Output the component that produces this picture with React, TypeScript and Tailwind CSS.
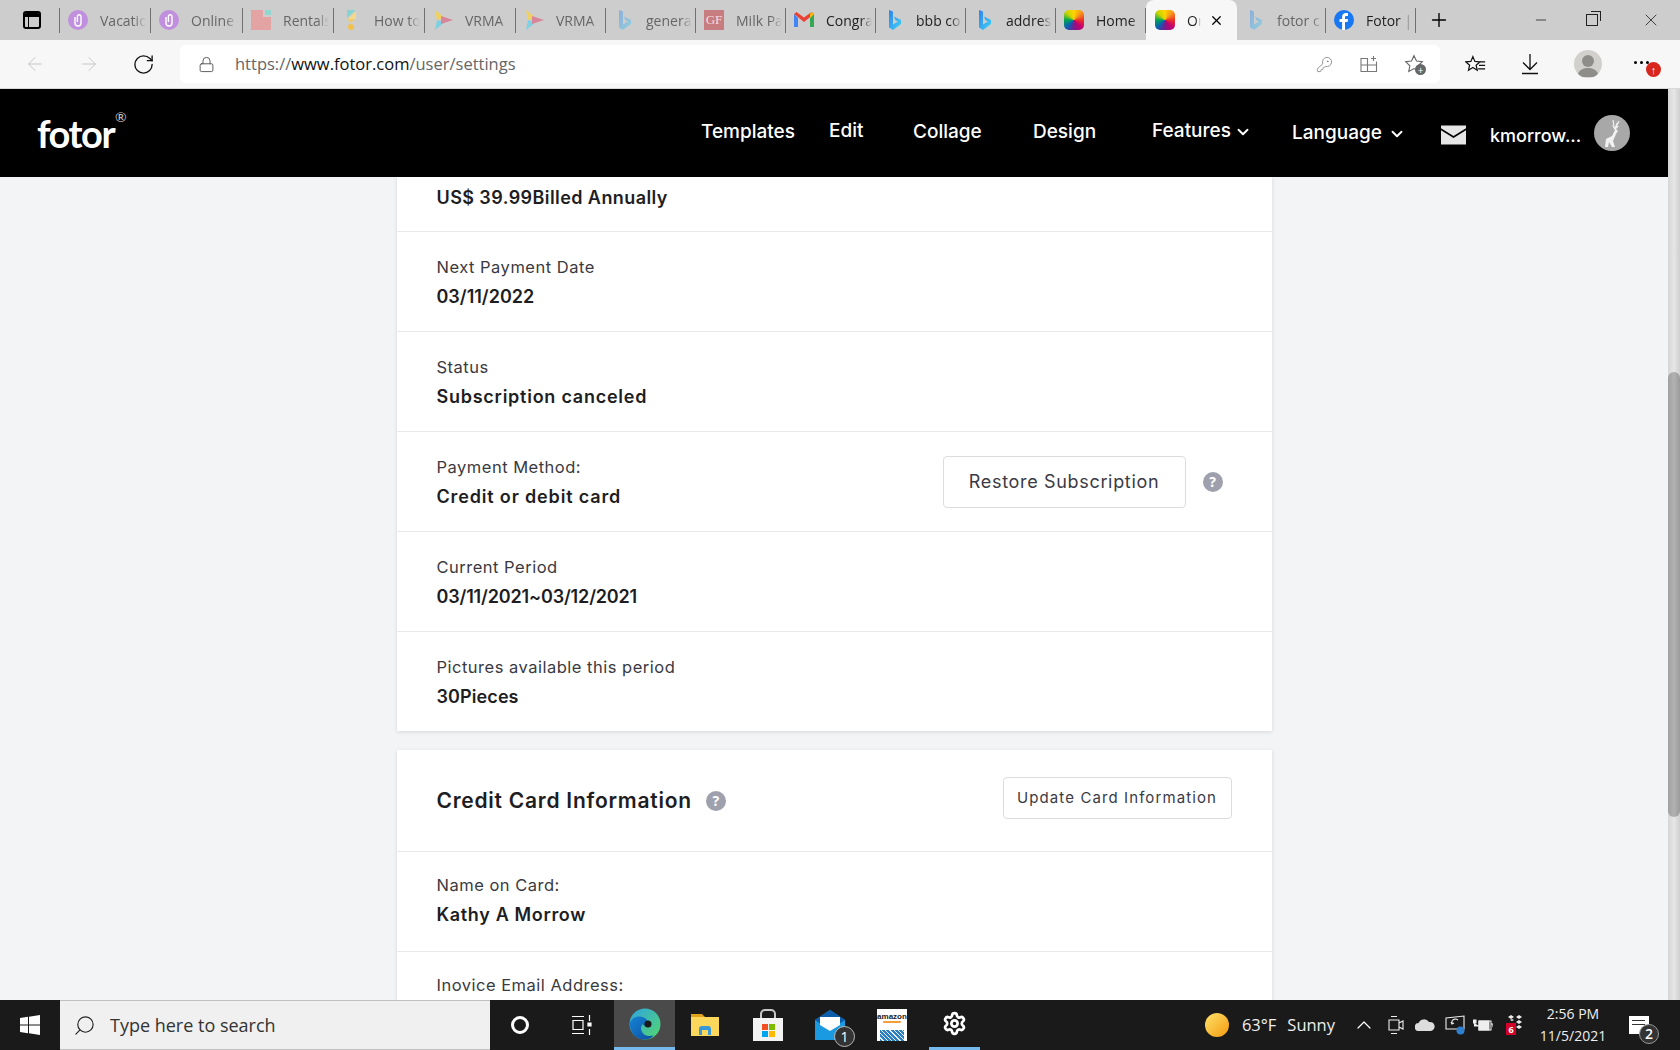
import React from 'react';
import { Plus, X, Minus, ArrowLeft, ArrowRight, RotateCw, ChevronDown, ChevronUp, Search, Settings, Lock, KeyRound } from 'lucide-react';

const uiFont = 'font-["Open_Sans",sans-serif]';

const Clip = () => (
  <svg viewBox="0 0 20 20" className="h-5 w-5">
    <circle cx="10" cy="10" r="10" fill="#c08fdd" />
    <path d="M7 7v6a3 3 0 0 0 6 0V6.500a1.800 1.800 0 0 0-3.600 0V12" fill="none" stroke="#fff" strokeWidth="1.400" />
  </svg>
);
const Rentals = () => (
  <svg viewBox="0 0 20 20" className="h-5 w-5">
    <path d="M0 0h12v7h8v13H0z" fill="#e4a3a3" />
    <path d="M14 0h6v5h-6z" fill="#8ed8d0" />
  </svg>
);
const HowTo = () => (
  <svg viewBox="0 0 20 20" className="h-5 w-5">
    <path d="M5 0h9L5 8z" fill="#86d4cf" />
    <path d="M14 1v8H6z" fill="#f2d98c" />
    <path d="M5 9h8l-4 4z" fill="#eecb6f" />
    <circle cx="9" cy="17" r="3" fill="#f0c14d" />
  </svg>
);
const Vrma = () => (
  <svg viewBox="0 0 20 20" className="h-5 w-5">
    <path d="M2 0l10 8-8 2z" fill="#f0d060" />
    <path d="M2 20l10-8-8-2z" fill="#7fd0e0" />
    <path d="M8 6l12 4-12 4z" fill="#d8849a" />
  </svg>
);
const Bing = ({ faded = false }: { faded?: boolean }) => (
  <svg viewBox="0 0 20 20" className={`h-5 w-5 ${faded ? 'opacity-40' : ''}`}>
    <defs>
      <linearGradient id={faded ? 'bingf' : 'bing'} x1="0" y1="0" x2="1" y2="1">
        <stop offset="0" stopColor="#2f80ed" />
        <stop offset="1" stopColor="#3fd5f5" />
      </linearGradient>
    </defs>
    <path d="M5 0l4 1.500v13l5-3-2.500-1.200L10 6.500l7 3.500v4l-8 6-4-2.500z" fill={`url(#${faded ? 'bingf' : 'bing'})`} />
  </svg>
);
const GoodFaith = () => (
  <div className="flex h-5 w-5 items-center justify-center bg-[#c77c80] font-['Liberation_Serif',serif] text-[13px] text-[#f3dede]">GF</div>
);
const Gmail = () => (
  <svg viewBox="0 0 20 20" className="h-5 w-5">
    <path d="M0 4v13h4V8z" fill="#4285f4" />
    <path d="M16 8v9h4V4z" fill="#34a853" />
    <path d="M0 4l10 8 10-8-2.500-2L10 7.500 2.500 2z" fill="#ea4335" />
    <path d="M17.500 2L20 4l-4 4V4z" fill="#fbbc04" />
  </svg>
);
const FotorIcon = () => (
  <div className="h-5 w-5 rounded-[5px] bg-[conic-gradient(#ffd400_0deg,#f7941d_45deg,#ee3124_90deg,#c4006e_135deg,#7d1a8c_180deg,#0a5fb4_225deg,#00a651_270deg,#c9d400_315deg,#ffd400_360deg)]" />
);
const Facebook = () => (
  <svg viewBox="0 0 20 20" className="h-5 w-5">
    <circle cx="10" cy="10" r="10" fill="#1877f2" />
    <path d="M11 20v-8h2.600l.4-3h-3V7.300c0-.9.400-1.400 1.500-1.400H14V3.200C13.500 3.100 12.700 3 12 3 9.700 3 8.100 4.400 8.100 7v2H5.500v3h2.600v8z" fill="#fff" />
  </svg>
);

const tabs = [
  { icon: <Clip />, label: 'Vacation', w: 'w-[91px]', text: 'text-[#666]' },
  { icon: <Clip />, label: 'Online', w: 'w-[92px]', text: 'text-[#666]' },
  { icon: <Rentals />, label: 'Rentals', w: 'w-[91px]', text: 'text-[#666]' },
  { icon: <HowTo />, label: 'How to', w: 'w-[91px]', text: 'text-[#666]' },
  { icon: <Vrma />, label: 'VRMA', w: 'w-[91px]', text: 'text-[#666]' },
  { icon: <Vrma />, label: 'VRMA', w: 'w-[90px]', text: 'text-[#666]' },
  { icon: <Bing faded />, label: 'general', w: 'w-[90px]', text: 'text-[#666]' },
  { icon: <GoodFaith />, label: 'Milk Pa', w: 'w-[90px]', text: 'text-[#666]' },
  { icon: <Gmail />, label: 'Congra', w: 'w-[90px]', text: 'text-[#222]' },
  { icon: <Bing />, label: 'bbb co', w: 'w-[90px]', text: 'text-[#222]' },
  { icon: <Bing />, label: 'address', w: 'w-[90px]', text: 'text-[#222]' },
  { icon: <FotorIcon />, label: 'Home', w: 'w-[90px]', text: 'text-[#222]' },
];

const Tab = ({ icon, label, w, text }: { icon: React.ReactNode; label: string; w: string; text: string }) => (
  <div className={`relative flex h-10 shrink-0 items-center ${w}`}>
    <div className="ml-2 shrink-0">{icon}</div>
    <span className={`ml-3 w-[46px] overflow-hidden whitespace-nowrap text-[14px] ${text} [mask-image:linear-gradient(to_right,black_75%,transparent)]`}>{label}</span>
    <div className="absolute right-0 top-2 h-[25px] w-px bg-[#707070]" />
  </div>
);

const TabStrip = () => (
  <div className={`flex h-10 shrink-0 items-center bg-[#cdcdcd] ${uiFont}`}>
    <div className="flex h-10 w-[59px] items-center justify-center pl-1">
      <div className="flex h-[18px] w-[18px] flex-col overflow-hidden rounded-[3px] border-2 border-black">
        <div className="h-[4px] bg-black" />
        <div className="ml-[3px] flex-1 border-l border-black" />
      </div>
    </div>
    <div className="h-[25px] w-px bg-[#707070]" />
    {tabs.map((t, i) => (
      <Tab key={i} {...t} />
    ))}
    <div className="flex h-10 w-[91px] shrink-0 items-center rounded-t-lg bg-[#f7f7f7] pl-[9px]">
      <FotorIcon />
      <span className="ml-3 w-[14px] overflow-hidden text-[14px] text-[#222] [mask-image:linear-gradient(to_right,black_60%,transparent)]">Or</span>
      <X size={15} className="ml-[8px] text-black" />
    </div>
    <Tab icon={<Bing faded />} label="fotor c" w="w-[89px]" text="text-[#666]" />
    <Tab icon={<Facebook />} label="Fotor |" w="w-[90px]" text="text-[#222]" />
    <Plus size={22} strokeWidth={1.5} className="ml-[12px] text-black" />
    <div className="ml-auto flex items-center text-[#222]">
      <Minus size={16} strokeWidth={1.2} />
      <div className="relative ml-[37px] h-[12px] w-[12px] border border-[#222] before:absolute before:-right-[4px] before:-top-[4px] before:h-[10px] before:w-[10px] before:border-r before:border-t before:border-[#222]" />
      <X size={20} strokeWidth={1} className="ml-[43px] mr-[19px]" />
    </div>
  </div>
);

const Toolbar = () => (
  <div className={`flex h-[48px] shrink-0 items-start bg-[#f7f7f7] pt-[5px] ${uiFont}`}>
    <div className="flex h-[38px] w-[180px] shrink-0 items-center pl-[24px]">
      <ArrowLeft size={22} strokeWidth={1} className="text-[#c2c2c2]" />
      <ArrowRight size={22} strokeWidth={1} className="ml-[32px] text-[#c2c2c2]" />
      <RotateCw size={23} strokeWidth={1.4} className="ml-[32px] text-[#111]" />
    </div>
    <div className="flex h-[38px] w-[1260px] shrink-0 items-center rounded-md bg-white">
      <Lock size={17} strokeWidth={1.2} className="ml-[18px] text-[#444]" />
      <div className="ml-[20px] text-[16.500px] text-[#666]">
        https://<span className="text-[#111]">www.fotor.com</span>/user/settings
      </div>
      <div className="ml-auto flex items-center text-[#777]">
        <KeyRound size={17} strokeWidth={1.1} />
        <svg viewBox="0 0 18 18" className="ml-[27px] h-[18px] w-[18px]" fill="none" stroke="#777" strokeWidth="1.1">
          <path d="M1 3.500h6.500v13H1zM1 10h15.500v6.500H7.500M7.500 10h9V6.500M13.500 1v5M11 3.500h5" />
        </svg>
        <div className="relative ml-[26px] mr-[16px]">
          <svg viewBox="0 0 24 24" className="h-[20px] w-[20px]" fill="none" stroke="#666" strokeWidth="1.3">
            <path d="M12 2l3 6.500 7 .8-5 4.800 1.300 7L12 17.500 5.700 21 7 14.100 2 9.300l7-.8z" />
          </svg>
          <div className="absolute -bottom-[1px] -right-[2px] flex h-[11px] w-[11px] items-center justify-center rounded-full bg-[#666] text-[10px] leading-none text-white">+</div>
        </div>
      </div>
    </div>
    <div className="flex h-[38px] flex-1 items-center text-[#111]">
      <svg viewBox="0 0 24 24" className="ml-[25px] h-[21px] w-[21px]" fill="none" stroke="#111" strokeWidth="1.4">
        <path d="M9 3l2.300 5.500 5.700.5-4.300 3.800 1.300 5.700L9 15.500 4 18.500l1.300-5.700L1 9l5.700-.5zM17 9h6M16 13h7M15 17h8" />
      </svg>
      <svg viewBox="0 0 22 22" className="ml-[33px] h-[22px] w-[22px]" fill="none" stroke="#111" strokeWidth="1.3">
        <path d="M11 1v15M4 9.500l7 7 7-7M3 20.500h16" />
      </svg>
      <div className="ml-[33px] flex h-7 w-7 items-end justify-center overflow-hidden rounded-full bg-[#d2d0cc]">
        <svg viewBox="0 0 28 28" className="h-7 w-7">
          <circle cx="14" cy="11" r="6" fill="#8f8d89" />
          <path d="M3 27c1-7 6-9 11-9s10 2 11 9z" fill="#8f8d89" />
        </svg>
      </div>
      <div className="relative ml-[32px] h-4 w-6">
        <div className="absolute left-0 top-[5px] flex gap-[3px]">
          <div className="h-[3px] w-[3px] rounded-full bg-black" />
          <div className="h-[3px] w-[3px] rounded-full bg-black" />
          <div className="h-[3px] w-[3px] rounded-full bg-black" />
        </div>
        <div className="absolute left-[12px] top-[6px] flex h-[15px] w-[15px] items-center justify-center rounded-full bg-[#d9261c] text-[11px] font-bold leading-none text-white">↑</div>
      </div>
    </div>
  </div>
);

const Stag = () => (
  <svg viewBox="0 0 36 36" className="h-9 w-9">
    <circle cx="18" cy="18" r="18" fill="#a8a8a8" />
    <path d="M23 7l-2 5-3-2 2 4 1 1-3 6-6 3-1 8h3l1-5 3 5h3l-2-6 3-7 2-3-2-2 3-3-2 0z" fill="#f2f2f2" />
    <path d="M19 5l1 6M25 6l-3 6" stroke="#f2f2f2" strokeWidth="1.200" />
  </svg>
);

const NavBar = () => (
  <div className="flex h-[88px] shrink-0 items-center bg-black text-white">
    <div className="ml-[37px] flex items-start font-['Lato',sans-serif] text-[38px] font-bold leading-none tracking-[-1.500px]">
      fotor
      <span className="-mt-[4px] ml-[1px] text-[14px] font-normal tracking-normal text-[#ccc]">®</span>
    </div>
    <div className="ml-auto flex items-center pb-[2px] font-['Inter',sans-serif] text-[19px] font-medium whitespace-nowrap">
      <span className="mt-[1px] w-[96px]">Templates</span>
      <span className="ml-[32px] mt-[-1px] w-[33px]">Edit</span>
      <span className="ml-[51px] w-[69px]">Collage</span>
      <span className="ml-[51px] w-[62px]">Design</span>
      <span className="ml-[57px] mt-[-1px] w-[78px]">Features</span>
      <ChevronDown size={18} strokeWidth={2.5} className="ml-[4px]" />
      <span className="ml-[40px] mt-[3px] w-[92px]">Language</span>
      <ChevronDown size={18} strokeWidth={2.5} className="ml-[4px] mt-[3px]" />
      <svg viewBox="0 0 26 20" className="ml-[35px] mt-[5px] h-[20px] w-[25px]">
        <path d="M0 0h26v3L13 11 0 3z" fill="#e6e6e6" />
        <path d="M0 5l13 8 13-8v15H0z" fill="#e6e6e6" />
      </svg>
      <span className="ml-[24px] mt-[6px] w-[90px] text-[18px]">kmorrow...</span>
      <div className="ml-[14px] mr-[38px] mt-[1px]">
        <Stag />
      </div>
    </div>
  </div>
);

const Help = ({ className = '' }: { className?: string }) => (
  <div className={`flex h-5 w-5 items-center justify-center rounded-full bg-[#9ea1ad] text-[14px] font-bold leading-none text-white ${className}`}>?</div>
);

const labelCls = "font-['Inter',sans-serif] text-[16.500px] leading-[24px] tracking-[0.5px] text-[#3a3a3f]";
const valueCls = "font-['Inter',sans-serif] text-[18px] font-semibold leading-[24px] text-[#1d1d22]";

const Row = ({ label, value, track, pb = '', children }: { label: string; value: string; track: string; pb?: string; children?: React.ReactNode }) => (
  <div className={`flex h-[100px] items-center justify-between border-b border-[#e8e8ea] pl-10 pr-[49px] ${pb}`}>
    <div>
      <div className={labelCls}>{label}</div>
      <div className={`mt-[6px] ${valueCls} ${track}`}>{value}</div>
    </div>
    {children}
  </div>
);

const Content = () => (
  <div className="flex flex-1 flex-col items-center overflow-hidden bg-[#f3f4f6]">
    <div className="w-[875px] shrink-0 bg-white shadow-[0_1px_4px_rgba(0,0,0,0.12)]">
      <div className="flex h-[55px] items-start border-b border-[#e8e8ea] pl-10 pt-[9px]">
        <div className={`${valueCls} tracking-[0.42px]`}>US$ 39.99Billed Annually</div>
      </div>
      <Row label="Next Payment Date" value="03/11/2022" track="tracking-[0px]" />
      <Row label="Status" value="Subscription canceled" track="tracking-[0.75px]" />
      <Row label="Payment Method:" value="Credit or debit card" track="tracking-[0.84px]">
        <div className="flex items-center">
          <div className="flex h-[52px] w-[243px] items-center justify-center rounded border border-[#dcdcdf] font-['Inter',sans-serif] text-[18px] tracking-[0.67px] text-[#3a3a46]">Restore Subscription</div>
          <Help className="ml-[17px]" />
        </div>
      </Row>
      <Row label="Current Period" value="03/11/2021~03/12/2021" track="tracking-[-0.16px]" />
      <div className="flex h-[99px] items-center pl-10">
        <div>
          <div className={labelCls}>Pictures available this period</div>
          <div className={`mt-[6px] ${valueCls} tracking-[0.1px]`}>30Pieces</div>
        </div>
      </div>
    </div>
    <div className="mt-[19px] w-[875px] shrink-0 bg-white shadow-[0_1px_4px_rgba(0,0,0,0.12)]">
      <div className="flex h-[102px] items-center justify-between border-b border-[#e8e8ea] pl-10 pr-10">
        <div className="flex items-center">
          <span className="font-['Inter',sans-serif] text-[21px] font-semibold tracking-[0.75px] text-[#1d1d22]">Credit Card Information</span>
          <Help className="ml-[14px]" />
        </div>
        <div className="mb-[5px] flex h-[42px] w-[229px] items-center justify-center rounded border border-[#dcdcdf] font-['Inter',sans-serif] text-[15px] tracking-[1.1px] text-[#3a3a46]">Update Card Information</div>
      </div>
      <Row label="Name on Card:" value="Kathy A Morrow" track="tracking-[0.65px]" pb="pb-[4px]" />
      <div className="h-[100px] pl-10 pt-[21px]">
        <div className={labelCls}>Inovice Email Address:</div>
      </div>
    </div>
  </div>
);

const Scrollbar = () => (
  <div className="w-3 shrink-0 bg-[linear-gradient(to_right,#d6d6d6,#e6e6e6_50%,#cfcfcf)] pt-[283px]">
    <div className="h-[445px] rounded-[6px] bg-[linear-gradient(to_right,#a0a0a0,#b2b2b2_50%,#9a9a9a)]" />
  </div>
);

const EdgeIcon = () => (
  <svg viewBox="0 0 32 32" className="h-8 w-8">
    <defs>
      <linearGradient id="edgeA" x1="0" y1="0" x2="1" y2="1">
        <stop offset="0" stopColor="#2fa4e0" />
        <stop offset="1" stopColor="#54d86c" />
      </linearGradient>
      <linearGradient id="edgeB" x1="0" y1="0" x2="1" y2="1">
        <stop offset="0" stopColor="#1583d6" />
        <stop offset="1" stopColor="#0d4f9e" />
      </linearGradient>
    </defs>
    <circle cx="16" cy="16" r="15.500" fill="url(#edgeA)" />
    <path d="M1 15C3 8 11 7 16 10c3 2 3.500 5 2 7-1 1.500-4 1-4-1-3 2-3 8 2 11 3 1.500 7 1 9 0-3 4-7 4.500-10 4.500C7 31.500 0 24 1 15z" fill="url(#edgeB)" />
    <circle cx="19" cy="16" r="3.500" fill="#1a1a1a" />
  </svg>
);

const Taskbar = () => (
  <div className={`flex h-[50px] shrink-0 items-center bg-[#1a1a1a] text-white ${uiFont}`}>
    <div className="flex h-full w-[60px] items-center justify-center">
      <svg viewBox="0 0 20 20" className="h-5 w-5" fill="#fff">
        <path d="M0 3l8-1.200V9.500H0zM9 1.700L20 0v9.500H9zM0 10.500h8v7.700L0 17zM9 10.500h11V20L9 18.300z" />
      </svg>
    </div>
    <div className="flex h-full w-[430px] items-center border-y border-[#c0c0c0] bg-[#f0f0f0] text-[#333]">
      <Search size={23} strokeWidth={1.2} className="ml-[13px] -scale-x-100 text-[#222]" />
      <span className="ml-[14px] text-[18px]">Type here to search</span>
    </div>
    <div className="flex h-full w-[60px] items-center justify-center">
      <div className="h-[18px] w-[18px] rounded-full border-[3px] border-white" />
    </div>
    <div className="flex h-full w-[64px] items-center justify-center">
      <svg viewBox="0 0 20 20" className="h-5 w-5" fill="none" stroke="#fff" strokeWidth="1.2">
        <path d="M0 1.500h12M0 18.500h12M1 5.500h10v9H1zM17.500 0v6M17.500 14v6" />
        <path d="M16 8h3v3h-3z" fill="#fff" />
      </svg>
    </div>
    <div className="flex h-full w-[61px] items-center justify-center border-b-[3px] border-[#76b9ed] bg-[#4a4a4a]">
      <EdgeIcon />
    </div>
    <div className="flex h-full w-[60px] items-center justify-center">
      <svg viewBox="0 0 28 26" className="h-[26px] w-7">
        <path d="M0 2h11l3 3H0z" fill="#e0a11b" />
        <path d="M0 5h28v19H0z" fill="#fbd75b" />
        <path d="M8 23v-6a3 3 0 0 1 3-3h6a3 3 0 0 1 3 3v6h-3v-5h-6v5z" fill="#3a97d8" />
      </svg>
    </div>
    <div className="flex h-full w-[65px] items-center justify-center">
      <svg viewBox="0 0 30 32" className="h-8 w-[30px]">
        <path d="M0 9h30v23H0z" fill="#f3f3f3" />
        <path d="M8 9V5a4 4 0 0 1 4-4h6a4 4 0 0 1 4 4v4" fill="none" stroke="#c8c8c8" strokeWidth="2" />
        <path d="M9 15h6v6H9z" fill="#f25022" />
        <path d="M16 15h6v6h-6z" fill="#7fba00" />
        <path d="M9 22h6v6H9z" fill="#00a4ef" />
        <path d="M16 22h6v6h-6z" fill="#ffb900" />
      </svg>
    </div>
    <div className="flex h-full w-[60px] items-center justify-center">
      <div className="relative h-[30px] w-[30px]">
        <svg viewBox="0 0 30 30" className="h-[30px] w-[30px]">
          <path d="M0 10L15 0l15 10v20H0z" fill="#1a9ae0" />
          <path d="M0 10L15 0l15 10-15 10z" fill="#0b5cab" />
          <path d="M5 7h20v8l-10 6-10-6z" fill="#fff" />
        </svg>
        <div className="absolute -bottom-[7px] -right-[10px] flex h-[21px] w-[21px] items-center justify-center rounded-full border border-[#bbb] bg-[#333] text-[14px] leading-none">1</div>
      </div>
    </div>
    <div className="flex h-full w-[64px] items-center justify-center">
      <div className="flex h-[32px] w-[30px] flex-col items-center bg-white pt-[4px]">
        <span className="font-['Liberation_Sans',sans-serif] text-[8px] font-bold leading-none text-[#222]">amazon</span>
        <div className="h-[2px] w-[18px] rounded-full bg-[#f19e38]" />
        <div className="mt-auto h-[11px] w-[24px] bg-[repeating-linear-gradient(45deg,#2c7fc0,#2c7fc0_2px,#e8f1f8_2px,#e8f1f8_3px)]" />
      </div>
    </div>
    <div className="ml-[5px] flex h-full w-[51px] items-center justify-center border-b-[3px] border-[#76b9ed]">
      <Settings size={25} strokeWidth={2.6} />
    </div>
    <div className="ml-auto flex h-full items-center">
      <div className="h-6 w-6 rounded-full bg-[linear-gradient(135deg,#fde26a,#f59a0f)]" />
      <span className="ml-[13px] text-[16.500px] text-[#eee]">63°F</span>
      <span className="ml-[11px] text-[16.500px] text-[#eee]">Sunny</span>
      <ChevronUp size={24} strokeWidth={1.2} className="ml-[17px]" />
      <svg viewBox="0 0 16 20" className="ml-[12px] h-5 w-4" fill="none" stroke="#eee" strokeWidth="1.1">
        <path d="M1 5h10v10H1zM11 8l4-2v8l-4-2M3 1.500h6M3 18.500h6" />
      </svg>
      <svg viewBox="0 0 20 12" className="ml-[11px] h-3 w-5" fill="#ddd">
        <path d="M4 12a4 4 0 0 1-.5-8A6 6 0 0 1 14 3a4.500 4.500 0 0 1 2 9z" />
      </svg>
      <svg viewBox="0 0 20 20" className="ml-[10px] h-5 w-5" fill="none" stroke="#eee" strokeWidth="1.1">
        <path d="M1 3l18-2v13H1zM13 5a4 4 0 0 0-6 1v3M6 7l1 2 2-1" />
        <circle cx="15.500" cy="15.500" r="4" fill="#2f7fd1" stroke="none" />
      </svg>
      <svg viewBox="0 0 20 14" className="ml-[8px] h-[14px] w-5" fill="none" stroke="#eee" strokeWidth="1.1">
        <path d="M6 3h12v9H6zM18 6h2v3" />
        <path d="M6 3h10v9H6zM0 2v3h3V2zM1.500 5v3H6" fill="#eee" />
      </svg>
      <div className="relative ml-[13px] h-5 w-5">
        <svg viewBox="0 0 20 20" className="h-5 w-5" fill="#eee">
          <path d="M2 2l3-2 3 2-3 2zM10 2l3-2 3 2-3 2zM10 7l3-2 3 2-3 2zM10 12l3-2 3 2-3 2zM4 5l2-1 2 1-2 1z" />
        </svg>
        <div className="absolute bottom-0 left-0 flex h-[12px] w-[10px] items-center justify-center bg-[#d4002a] text-[9px] font-bold leading-none text-white">6</div>
      </div>
      <div className="ml-[9px] flex w-[76px] flex-col items-center text-[14px] leading-[22px] text-[#eee]">
        <span>2:56 PM</span>
        <span>11/5/2021</span>
      </div>
      <div className="relative ml-[18px] mr-[31px] h-[18px] w-5 bg-white">
        <div className="ml-[3px] mt-[4px] h-px w-[13px] bg-[#333]" />
        <div className="ml-[3px] mt-[3px] h-px w-[13px] bg-[#333]" />
        <div className="absolute -bottom-[10px] -right-[10px] flex h-[20px] w-[20px] items-center justify-center rounded-full border border-[#999] bg-[#333] text-[14px] font-semibold leading-none text-white">2</div>
      </div>
    </div>
  </div>
);

const App: React.FC = () => {
  return (
    <div className="flex h-[1050px] w-[1680px] flex-col overflow-hidden">
      <TabStrip />
      <Toolbar />
      <div className="h-px shrink-0 bg-[#d8d8d8]" />
      <div className="flex min-h-0 flex-1">
        <div className="flex min-w-0 flex-1 flex-col">
          <NavBar />
          <Content />
        </div>
        <Scrollbar />
      </div>
      <Taskbar />
    </div>
  );
};

export default App;
